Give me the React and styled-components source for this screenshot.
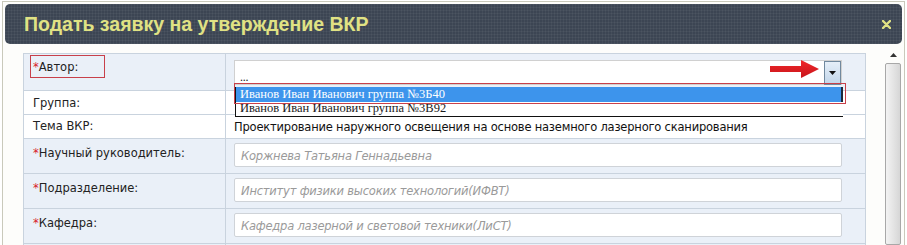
import React from 'react'
import styled, { createGlobalStyle } from 'styled-components'

const GlobalStyle = createGlobalStyle`
  html, body {
    margin: 0;
    padding: 0;
    background: #ffffff;
    overflow: hidden;
  }
  body {
    font-family: "DejaVu Sans", Verdana, sans-serif;
  }
`

const Frame = styled.div`
  margin: 1px 2px 0;
  height: 244px;
  overflow: hidden;
  border: 1px solid #c9c9bb;
  border-bottom: none;
  padding: 2px 2px 0;
  box-sizing: border-box;
  background: #fdfdfb;
  display: flex;
  flex-direction: column;
`

const TitleBar = styled.div`
  flex-shrink: 0;
  height: 40px;
  border-radius: 5px;
  background-color: #3c4553;
  background-image:
    repeating-linear-gradient(90deg, rgba(255, 255, 255, 0.045) 0 1px, transparent 1px 3px),
    repeating-linear-gradient(0deg, rgba(255, 255, 255, 0.045) 0 1px, transparent 1px 3px);
  display: flex;
  align-items: center;
  justify-content: space-between;
  padding: 0 11px 0 19px;
`

const Title = styled.h1`
  margin: 0;
  font-family: "Liberation Sans", Arial, sans-serif;
  font-weight: bold;
  font-size: 19.5px;
  color: #e0e284;
`

const CloseIcon = () => (
  <svg width="9" height="9" viewBox="0 0 9 9">
    <path d="M1 1 L8 8 M8 1 L1 8" stroke="#e0e284" strokeWidth="2.4" strokeLinecap="round" />
  </svg>
)

const Body = styled.div`
  display: flex;
  flex: 1;
  min-height: 0;
`

const Main = styled.div`
  flex: 1;
  padding: 9px 0 0 18px;
`

const Table = styled.div`
  width: 843px;
  border: 1px solid #c9d3de;
  border-bottom: none;
  box-sizing: border-box;
`

const Row = styled.div`
  display: grid;
  grid-template-columns: 202px 1fr;
  height: ${p => p.$height}px;
  background: ${p => (p.$shaded ? '#eaf0f8' : '#ffffff')};
  border-bottom: 1px solid #c9d3de;
  box-sizing: border-box;
`

const LabelCell = styled.div`
  border-right: 1px solid #c9d3de;
  padding: ${p => p.$top ?? 7}px 0 0 9px;
  font-size: 11.5px;
  color: #222;
`

const ValueCell = styled.div`
  position: relative;
  padding: ${p => p.$top ?? 0}px 0 0 8px;
  font-size: 11.5px;
  letter-spacing: -0.2px;
  color: #111;
  display: flex;
  align-items: ${p => (p.$center ? 'center' : 'flex-start')};
`

const Star = styled.span`
  color: #d8202a;
`

const BoxedLabel = styled.div`
  width: 75px;
  height: 23px;
  margin-left: -3px;
  padding: 4px 0 0 2px;
  box-sizing: border-box;
  border: 1px solid #c8404a;
`

const Label = ({ required, children }) => (
  <>
    {required && <Star>*</Star>}
    {children}
  </>
)

const Input = styled.div`
  width: 608px;
  height: 24px;
  box-sizing: border-box;
  border: 1px solid #cfd3d8;
  border-radius: 2px;
  background: #fff;
  padding: 5px 0 0 6px;
  font-style: italic;
  color: #9a9a9a;
`

const Select = styled.div`
  width: 608px;
  height: 25px;
  box-sizing: border-box;
  border: 1px solid #d0d0d0;
  background: #fff;
  display: flex;
  justify-content: flex-end;
`

const DropButton = styled.div`
  width: 17px;
  height: 24px;
  box-sizing: border-box;
  border: 1px solid #71899e;
  background: linear-gradient(#e6eff8, #c2d6ea);
  display: flex;
  align-items: center;
  justify-content: center;
`

const Caret = () => (
  <svg width="7" height="4" viewBox="0 0 7 4">
    <path d="M0 0 H7 L3.5 4 Z" fill="#111" />
  </svg>
)

const Arrow = styled.svg`
  position: absolute;
  left: 544px;
  top: 6px;
`

const Dots = styled.div`
  position: absolute;
  left: 14px;
  top: 16px;
  font-family: "Liberation Serif", "Times New Roman", serif;
  font-size: 12px;
  color: #222;
`

const List = styled.div`
  position: absolute;
  left: 9px;
  top: 33px;
  width: 608px;
  box-sizing: border-box;
  border-left: 1px solid #111;
  border-bottom: 1px solid #111;
  background: #fff;
  font-family: "Liberation Serif", "Times New Roman", serif;
  font-size: 12.5px;
  letter-spacing: 0;
  z-index: 2;
`

const Option = styled.div`
  height: ${p => (p.$active ? 15 : 14)}px;
  line-height: ${p => (p.$active ? 15 : 13)}px;
  padding-left: 4px;
  background: ${p => (p.$active ? '#3d94ec' : '#fff')};
  color: ${p => (p.$active ? '#fff' : '#1a1a1a')};
  border-right: ${p => (p.$active ? '2px solid #1e2a3a' : 'none')};
  white-space: nowrap;
`

const Highlight = styled.div`
  position: absolute;
  left: 8px;
  top: 29px;
  width: 612px;
  height: 21px;
  box-sizing: border-box;
  border: 1px solid #c8404a;
  z-index: 3;
`

const Scrollbar = styled.div`
  width: 16px;
  margin: 3px 1px 0 0;
  display: flex;
  flex-direction: column;
  align-items: center;
`

const ScrollUp = styled.div`
  height: 15px;
  display: flex;
  align-items: center;
  justify-content: center;
`

const Thumb = styled.div`
  width: 14px;
  flex: 1;
  margin-top: 1px;
  border: 1px solid #a8a8a8;
  border-radius: 2px;
  background: linear-gradient(90deg, #f3f3f3, #e2e2e2 60%, #d6d6d6);
`

const rows = [
  { label: 'Научный руководитель:', value: 'Коржнева Татьяна Геннадьевна' },
  { label: 'Подразделение:', value: 'Институт физики высоких технологий(ИФВТ)' },
  { label: 'Кафедра:', value: 'Кафедра лазерной и световой техники(ЛиСТ)' },
]

export default function App() {
  return (
    <>
      <GlobalStyle />
      <Frame>
        <TitleBar>
          <Title>Подать заявку на утверждение ВКР</Title>
          <CloseIcon />
        </TitleBar>
        <Body>
          <Main>
            <Table>
              <Row $height={37} $shaded>
                <LabelCell $top={1}>
                  <BoxedLabel>
                    <Label required>Автор:</Label>
                  </BoxedLabel>
                </LabelCell>
                <ValueCell $top={6}>
                  <Select>
                    <DropButton>
                      <Caret />
                    </DropButton>
                  </Select>
                  <Dots>...</Dots>
                  <Arrow width="49" height="18" viewBox="0 0 49 18">
                    <defs>
                      <linearGradient id="ar" x1="0" y1="0" x2="0" y2="1">
                        <stop offset="0" stopColor="#f0282a" />
                        <stop offset="1" stopColor="#c8141a" />
                      </linearGradient>
                    </defs>
                    <path d="M0 6 H31 V0 L49 9 L31 18 V12 H0 Z" fill="url(#ar)" />
                  </Arrow>
                  <List>
                    <Option $active>Иванов Иван Иванович группа №3Б40</Option>
                    <Option>Иванов Иван Иванович группа №3В92</Option>
                  </List>
                  <Highlight />
                </ValueCell>
              </Row>
              <Row $height={24}>
                <LabelCell $top={5}>Группа:</LabelCell>
                <ValueCell />
              </Row>
              <Row $height={24}>
                <LabelCell $top={4}>Тема ВКР:</LabelCell>
                <ValueCell $center>
                  Проектирование наружного освещения на основе наземного лазерного сканирования
                </ValueCell>
              </Row>
              {rows.map(r => (
                <Row key={r.label} $height={35} $shaded>
                  <LabelCell $top={7}>
                    <Label required>{r.label}</Label>
                  </LabelCell>
                  <ValueCell $top={4}>
                    <Input>{r.value}</Input>
                  </ValueCell>
                </Row>
              ))}
              <Row $height={35} $shaded>
                <LabelCell />
                <ValueCell />
              </Row>
            </Table>
          </Main>
          <Scrollbar>
            <ScrollUp>
              <svg width="7" height="4" viewBox="0 0 7 4">
                <path d="M0 4 H7 L3.5 0 Z" fill="#333" />
              </svg>
            </ScrollUp>
            <Thumb />
          </Scrollbar>
        </Body>
      </Frame>
    </>
  )
}
